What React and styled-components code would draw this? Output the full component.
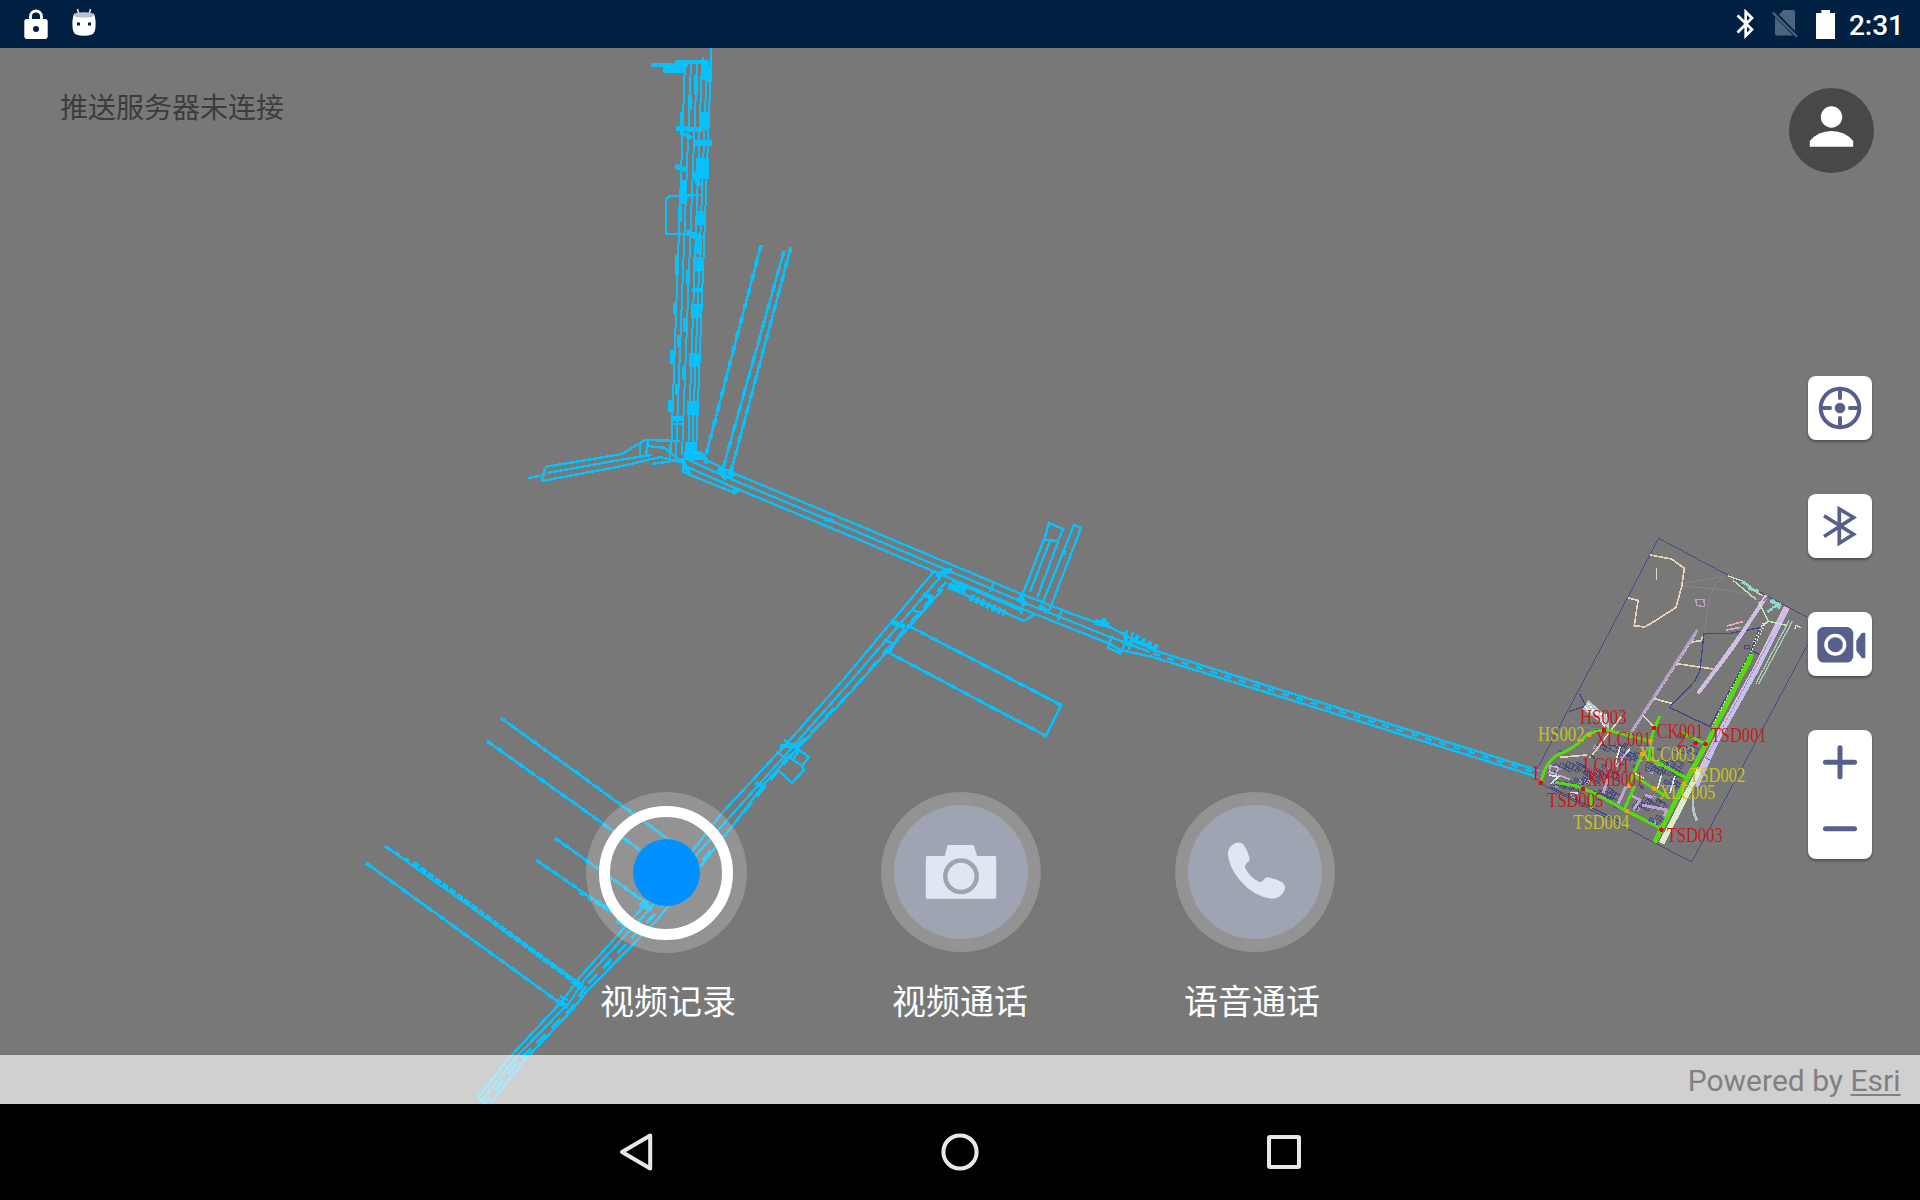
import React from 'react';
import styled, { createGlobalStyle } from 'styled-components';

const GlobalStyle = createGlobalStyle`
  * { box-sizing: border-box; }
  body { margin: 0; background: #000; }
  button { border: 0; padding: 0; font: inherit; }
  svg { display: block; }
`;

const Screen = styled.div`
  display: flex;
  flex-direction: column;
  width: 1920px;
  height: 1200px;
  overflow: hidden;
  font-family: Roboto, 'Noto Sans CJK SC', sans-serif;
`;

const StatusBar = styled.header`
  display: flex;
  align-items: center;
  justify-content: space-between;
  height: 48px;
  padding: 0 16px 0 24px;
  background: #002142;
  color: #fff;
`;

const StatusGroup = styled.div`
  display: flex;
  align-items: center;
  gap: ${(p) => p.$gap}px;
`;

const Clock = styled.time`
  font-size: 28px;
  line-height: 46px;
  font-weight: 500;
  padding-top: 3px;
  margin-left: -4px;
`;

const MapView = styled.main`
  position: relative;
  display: flex;
  flex-direction: column;
  height: 1056px;
  background: #787878;
`;

const MapCanvas = styled.svg`
  position: absolute;
  inset: 0;
`;

const Overlay = styled.div`
  position: relative;
  display: flex;
  flex: 1;
  flex-direction: column;
`;

const TopRow = styled.div`
  display: flex;
  justify-content: space-between;
  height: 327.5px;
  padding: 40px 46px 0 60px;
`;

const ServerStatus = styled.span`
  padding-top: 2px;
  font-size: 28px;
  line-height: 38px;
  color: #3c3c3c;
`;

const Avatar = styled.button`
  width: 85px;
  height: 85px;
  border-radius: 50%;
  background: #484848;
`;

const ToolColumn = styled.nav`
  display: flex;
  flex-direction: column;
  align-items: flex-end;
  gap: 54px;
  height: 416.5px;
  padding-right: 48px;
`;

const ToolButton = styled.button`
  flex: none;
  width: 64px;
  height: ${(p) => p.$height || 64}px;
  border-radius: 8px;
  background: #fff;
  box-shadow: 0 2px 3px rgba(0, 0, 0, 0.35);
`;

const CallRow = styled.div`
  display: flex;
  justify-content: center;
  gap: 134px;
  height: 188px;
`;

const CallButton = styled.button`
  display: flex;
  align-items: center;
  justify-content: center;
  width: ${(p) => p.$size || 160}px;
  height: ${(p) => p.$size || 160}px;
  border-radius: 50%;
  background: rgba(255, 255, 255, 0.2);
`;

const CallDisc = styled.span`
  display: flex;
  align-items: center;
  justify-content: center;
  width: 134px;
  height: 134px;
  border-radius: 50%;
  background: #9ea4b2;
`;

const RecordRing = styled(CallDisc)`
  border: 11px solid #fff;
  background: none;
`;

const RecordDot = styled.span`
  width: 67px;
  height: 67px;
  border-radius: 50%;
  background: #0090ff;
`;

const LabelRow = styled.div`
  display: flex;
  justify-content: center;
  gap: 156px;
`;

const CallLabel = styled.span`
  width: 136px;
  font-size: 34px;
  line-height: 44px;
  color: #fff;
  white-space: nowrap;
`;

const Attribution = styled.footer`
  position: relative;
  display: flex;
  align-items: center;
  justify-content: flex-end;
  height: 49px;
  padding: 3px 19.500px 0 0;
  background: rgba(255, 255, 255, 0.65);
  color: #808080;
  font-size: 30px;
  line-height: 40px;
  white-space: pre;
`;

const Provider = styled.span`
  text-decoration: underline;
  text-decoration-thickness: 2px;
  text-underline-offset: 3px;
`;

const NavBar = styled.nav`
  display: flex;
  align-items: center;
  justify-content: center;
  height: 96px;
  background: #000;
`;

const NavButton = styled.button`
  display: flex;
  align-items: center;
  justify-content: center;
  width: 324px;
  height: 96px;
  background: none;
`;

const INK = '#57608a';

const trunk = [
  [685, 671], [691, 676], [697, 682], [702, 688], [707, 692], [711, 696],
].map(([a, b]) => `M${a} 62L${b} 455`).join('');

const mains = [
  'M652 464L700 457L733 473L860 526L1020 593.500L1075 615L1110 627L1153 650L1540 771',
  'M684 458L733 480L860 533L1020 601L1110 637L1150 652',
  'M683 465L735 488L860 540L1020 608L1110 644L1120 650L1153 657L1538 777',
  'M683 472L735 493L740 489',
  'M683 460V473',
];

const southWest = [
  'M935 570L843 680L790 740L722 813L693 850L643 907L580 977L563 1000L510 1057L478 1097L486 1104',
  'M942 575L850 682L797 742L729 818L698 853L648 911L585 979L569 1003L516 1057L483 1099',
  'M943 589L850 693L765 783L727 833L704 862L658 919L588 990L572 1010L522 1063L491 1103',
];

const branches = [
  'M501 718L672 842', 'M487 741L640 850', 'M555 838L645 902', 'M536 860L623 920',
  'M385 846L577 982', 'M366 863L560 1003',
  'M761 245L706 455', 'M784 251L722 472', 'M791 247L730 475',
  'M907 625L1061 705L1046 736L884 650',
  'M1022 596L1045 537L1049 523L1063 529L1058 541L1045 540',
  'M1030 592L1050 541', 'M1037 598L1058 542', 'M1043 602L1074 525L1081 528L1049 611',
  'M950 588L1024 621L1035 614', 'M952 581L1020 610L1022 614',
  'M1112 635L1108 648L1120 653L1127 640', 'M1127 630L1124 646M1133 632L1129 650',
  'M545 467L622 454L645 440L680 441', 'M547 473L625 459L652 455', 'M542 481L622 466L660 457L680 462',
  'M528 478L545 475V468L542 481', 'M640 442V457M648 440L646 455', 'M648 446L665 448L686 466',
  'M700 195L670 196L666 199V234L690 234', 'M711 48V80', 'M703 57V66',
  'M784 740L809 757L802 766L804 770L792 783L778 770L786 758L776 752',
  'M790 744L799 750L793 760L801 765M785 754L794 760',
  'M912 610L922 613L933 600', 'M884 640L894 644L890 652L884 650',
  'M560 996L568 1000M574 980L582 984',
  'M994 582L990 592M1062 610L1058 621M670 445V462M676 441V460',
];

const heavy = [
  ['M651 64.500H688', 4], ['M675 62H709', 4], ['M663 70H686', 6], ['M705 62V80', 8], ['M709 66V82', 5],
  ['M704 112V130', 10], ['M676 128L702 130', 5], ['M682 133L692 138', 4], ['M695 143H712', 6],
  ['M702 158V179', 13], ['M675 166L686 170', 5], ['M694 172L699 186', 5], ['M700 211V225', 9],
  ['M686 232L702 239', 6], ['M699 240V254', 6], ['M697 257V271', 9], ['M697 288V292', 10],
  ['M696 304V318', 10], ['M694 353V367', 10], ['M692 401V415', 10], ['M690 442V460', 10],
  ['M672 418H682', 5], ['M674 424H682', 2], ['M684 455H702', 9], ['M682 460L690 475', 4],
  ['M682 112V135', 4], ['M690 95V110', 4], ['M696 75V94', 4], ['M680 206V222', 4], ['M683 180V204', 4],
  ['M677 255V275', 4], ['M688 270V285', 4], ['M675 303V314', 4], ['M685 318V332', 4], ['M679 335V347', 4],
  ['M672 350V364', 4], ['M684 366V380', 4], ['M677 384V395', 4], ['M670 400V412', 4],
  ['M719 468L727 479', 6], ['M729 469L733 477', 6], ['M732 492L740 489', 4], ['M701 454L708 463', 5],
  ['M948 586L966 591', 7], ['M936 575L952 570', 5], ['M923 594L933 598', 5], ['M892 622L905 627', 5],
  ['M1020 596L1025 606', 5], ['M1039 606L1048 612', 5], ['M1062 552H1066', 5],
  ['M1095 622L1109 625', 6], ['M1104 618V627', 4], ['M1124 632L1128 646', 4], ['M1132 640L1153 648', 4],
  ['M780 746L800 745', 4], ['M755 783L766 787', 4], ['M640 904L652 909', 6],
  ['M572 980L582 988', 6], ['M556 1000L568 1007', 5], ['M616 920L627 926', 4], ['M824 519L834 521', 4],
];

const dashed = [
  ['M413 863L574 981', 5, '7 2'], ['M580 892L620 916', 5, '6 3'], ['M970 597L1005 613', 7, '4 2'],
  ['M501 718L655 829', 3.5, '5 8'], ['M487 741L640 850', 3.5, '6 7'], ['M366 863L560 1003', 3.5, '6 9'],
  ['M536 860L580 890', 3.5, '5 6'], ['M555 838L645 902', 3.5, '5 7'],
  ['M385 846L413 864', 3.5, '5 7'], ['M761 245L706 455', 4, '6 9'], ['M784 251L722 472', 3.5, '7 11'],
  ['M791 247L730 475', 3.5, '6 9'], ['M907 625L1061 705', 3.5, '6 8'], ['M884 650L1046 736', 3.5, '6 9'],
  ['M1153 653.500L1540 774', 2.5, '7 8'], ['M1135 637L1158 648', 6, '4 3'],
  ['M946 582L853 689L800 744L730 829L702 861L652 917L586 986', 3, '13 8'],
  ['M586 986L571 1009L519 1060L487 1101', 3, '13 8'],
];

const labels = [
  ['HS003', 180, 612, 'r'], ['HS002', 54, 664, 'y'], ['XLC001', 226, 677, 'r'], ['CK001', 410, 655, 'r'],
  ['2', 470, 682, 'r'], ['TSD001', 572, 665, 'r'], ['XLC003', 356, 723, 'y'], ['LC001', 190, 755, 'r'],
  ['1', 33, 780, 'r'], ['XMB001', 202, 798, 'r'], ['TSD002', 508, 787, 'y'], ['XLC005', 418, 838, 'y'],
  ['TSD005', 82, 862, 'r'], ['TSD004', 160, 927, 'y'], ['TSD003', 440, 967, 'r'],
];

const stops = [
  [62, 788, 'r'], [252, 630, 'r'], [208, 644, 'o'], [403, 624, 'r'], [392, 663, 'o'], [527, 669, 'r'],
  [557, 672, 'r'], [366, 703, 'o'], [214, 775, 'r'], [262, 768, 'r'], [189, 808, 'r'], [328, 798, 'o'],
  [403, 806, 'o'], [491, 793, 'o'], [321, 874, 'o'], [424, 929, 'r'],
];

const blocks = [
  [100, 712, 110, 56, 16], [90, 772, 96, 40, 13], [190, 725, 105, 90, 24], [375, 722, 115, 58, 24],
  [300, 680, 60, 48, 10], [340, 815, 95, 78, 20], [210, 650, 120, 60, 8], [460, 660, 70, 50, 9],
  [400, 700, 85, 50, 8], [215, 800, 90, 40, 10],
];

const BuildingBlock = ({ spec: [x, y, w, h, n] }) => (
  <g transform={`rotate(27 ${x + w / 2} ${y + h / 2})`}>
    {Array.from({ length: n }, (_, i) => {
      const cx = x + ((i * 37) % 97) / 97 * w;
      const cy = y + ((i * 53) % 89) / 89 * h;
      return (
        <rect key={i} x={cx} y={cy} width={10 + (i * 7) % 17} height={6 + (i * 5) % 12}
          fill={i % 5 === 0 ? '#62678a' : 'none'} stroke={i % 7 === 3 ? '#b9a4d0' : '#454a7c'} strokeWidth="3" />
      );
    })}
  </g>
);

const Campus = () => (
  <g transform="translate(1520 520) scale(0.33333)" fill="none" strokeWidth="3">
    <path d="M416 55L862 292M862 375L515 1026L60 790M50 750L416 55" stroke="#444a84" />
    <path d="M490 190L610 170Q570 200 565 260L552 340M488 198L640 212L720 240M430 580L552 480M140 590L180 620L330 640" stroke="#858585" />
    <path d="M390 105L455 117L493 145L485 200L468 262L405 303L374 321L343 317L354 241L323 233M410 145V180M470 431L580 447M402 536L455 550M368 585L403 622M508 367L543 362L548 348M305 588L210 714M120 712L200 705" stroke="#ecd2b6" strokeWidth="5" />
    <path d="M554 340H630L720 323L690 400L570 620L448 562M552 340L540 450L524 484L450 560M180 522L197 558L148 574M674 376h14v10h-14zM700 395l18 8M90 800L300 905M200 555L240 600" stroke="#414780" strokeWidth="4" />
    <path d="M650 540L715 420" stroke="#4c5290" strokeWidth="6" />
    <path d="M528 239L552 238L553 260L529 256Z" stroke="#bba3c8" strokeWidth="4" />
    <path d="M532 330L325 650" stroke="#b79fc3" strokeWidth="9" />
    <path d="M528 345L325 655" stroke="#dcc8e4" strokeWidth="3" strokeDasharray="8 5" />
    <path d="M738 230L640 380L537 516" stroke="#d9bedf" strokeWidth="12" strokeLinecap="round" />
    <path d="M735 238L545 500" stroke="#bec2ed" strokeWidth="4" />
    <path d="M618 330L664 322M620 318L668 305" stroke="#dfadc8" strokeWidth="5" />
    <path d="M800 262L712 440L600 640L525 790" stroke="#e5bad9" strokeWidth="19" />
    <path d="M800 266L712 444L602 640L530 800" stroke="#bec2f4" strokeWidth="11" />
    <path d="M755 350L560 710" stroke="#6268a0" strokeWidth="2" strokeDasharray="8 4" />
    <path d="M807 302L708 490M818 302L716 492" stroke="#aacbb5" strokeWidth="4" />
    <path d="M740 305L575 620M730 310L700 370" stroke="#d9e9c9" strokeWidth="4" strokeDasharray="4 6" />
    <path d="M625 168L672 185L710 215L690 205L740 235M640 182L708 238M715 245L746 304L724 319M746 304L800 316M824 328L828 316L842 322" stroke="#c9e8ba" strokeWidth="4" />
    <path d="M665 185l28 16M684 205l32 8M750 245l32 8M756 238l24 28M756 262l28 -8M742 276l14 -10" stroke="#8fd8cc" strokeWidth="8" />
    <path d="M720 225l-12 14M732 225l-12 18M744 230l-14 14" stroke="#9d6792" strokeWidth="4" />
    <path d="M205 540L268 595V628L232 600L188 568Z" fill="#b9c7ce" stroke="none" />
    <path d="M195 560L250 600M205 550L255 620M200 572L260 585" stroke="#eefafa" strokeWidth="5" strokeDasharray="7 3" />
    {blocks.map((b) => <BuildingBlock key={b.join()} spec={b} />)}
    <path d="M318 800L294 852M262 778L250 820M340 870L360 840L330 825M365 855L440 870L432 890M375 825L395 832" stroke="#c0a3d0" strokeWidth="9" />
    <path d="M90 738L115 742L108 762L88 756ZM115 765L150 778M325 690L290 740" stroke="#d4acd7" strokeWidth="5" />
    <path d="M86 765L115 770L92 792M150 818L175 820M345 760L372 775M425 765L412 808M465 767L450 820M300 680L285 735M330 686L315 704" stroke="#d5eadf" strokeWidth="5" />
    <path d="M540 745L425 970" stroke="#dceecb" strokeWidth="17" />
    <path d="M519 825V860Q522 885 531 902" stroke="#afc8d2" strokeWidth="8" />
    <path d="M555 712L610 742M470 688L484 668M530 670L524 714M540 680L534 714" stroke="#666bb0" />
    <g stroke="#54dc0c" strokeWidth="9" strokeLinecap="round">
      <path d="M694 408L560 670" strokeWidth="14" />
      <path d="M560 670L494 790L406 962" strokeWidth="14" />
      <path d="M64 786Q70 735 110 706Q165 687 205 640L255 628L392 664L403 624L418 592" />
      <path d="M392 664L388 714L498 774M366 703L325 798M345 770L403 806L438 830M343 800L314 866M110 788L170 798L225 820L321 874L424 926M214 818V862M490 640L557 672" />
    </g>
    {stops.map(([x, y, c]) => <circle key={`${x}-${y}`} cx={x} cy={y} r="7" fill={c === 'r' ? '#e80808' : '#ff9d0a'} />)}
    <g fontFamily="'Liberation Serif', serif" fontSize="61" shapeRendering="auto">
      {labels.map(([t, x, y, c]) => (
        <text key={t + x} x={x} y={y} textLength={t.length * 28} lengthAdjust="spacingAndGlyphs"
          fill={c === 'r' ? '#cc181c' : '#c7c322'} stroke="none">{t}</text>
      ))}
    </g>
  </g>
);

const MapLayer = () => (
  <MapCanvas width="1920" height="1056" viewBox="0 48 1920 1056" shapeRendering="crispEdges">
    <g fill="none" stroke="#08c0fa">
      <path d={trunk} strokeWidth="2" />
      {[...mains, ...southWest, ...branches].map((d) => <path key={d} d={d} strokeWidth="2.4" />)}
      {heavy.map(([d, w]) => <path key={d} d={d} strokeWidth={w} />)}
      {dashed.map(([d, w, dash]) => <path key={d + w} d={d} strokeWidth={w} strokeDasharray={dash} />)}
    </g>
    <Campus />
  </MapCanvas>
);

const LockIcon = () => (
  <svg width="24" height="32" viewBox="24 7 24 32">
    <path d="M30.500 20V15.500a5.500 5.500 0 0 1 11 0V20" fill="none" stroke="#fff" strokeWidth="2.800" />
    <rect x="24.300" y="18" width="23.400" height="20" rx="2.400" fill="#fff" />
    <circle cx="36" cy="28" r="3" fill="#002142" />
  </svg>
);

const RobotIcon = () => (
  <svg width="24" height="32" viewBox="72 8 24 32">
    <path d="M77.500 9L79 15M90.500 9L89 15" stroke="#fff" strokeWidth="1.400" />
    <path d="M73.500 15Q72 20 72.500 27Q73 33 76 34.500Q84 37 92 34.500Q95 33 95.500 27Q96 20 94.500 15Z" fill="#fff" />
    <ellipse cx="84" cy="15" rx="10.500" ry="2.700" fill="#b9c1d0" />
    <path d="M77 22.500h3v3h-3zM88 22.500h3v3h-3z" fill="#002142" />
  </svg>
);

const StatusBluetooth = () => (
  <svg width="18" height="30" viewBox="1736 9 18 30">
    <path d="M1737.500 15.500L1752 29.500L1745.700 35.800V11.700L1752 18L1737.500 32.500" fill="none" stroke="#fff" strokeWidth="2.700" />
  </svg>
);

const NoSimIcon = () => (
  <svg width="26" height="30" viewBox="1772 10 26 30">
    <path d="M1779 15.500L1783.500 11H1793Q1795 11 1795 13V32ZM1775 18L1793 36.500H1777Q1775 36.500 1775 34.500Z" fill="#4d6480" />
    <path d="M1772.800 13.500L1797 37.800" stroke="#4d6480" strokeWidth="2.200" />
  </svg>
);

const BatteryIcon = () => (
  <svg width="19" height="29" viewBox="0 0 19 29">
    <path d="M5.300 0h8.700v3H19v26H0V3h5.300z" fill="#fff" />
  </svg>
);

const PersonIcon = () => (
  <svg width="85" height="85" viewBox="0 0 85 85" fill="#fff">
    <circle cx="42.500" cy="29" r="10.700" />
    <path d="M20.800 58.700V53Q29 43 42.500 43T64.200 53V58.700Z" />
  </svg>
);

const TargetIcon = () => (
  <svg width="64" height="64" viewBox="0 0 64 64" fill="none" stroke={INK} strokeWidth="4">
    <circle cx="32" cy="32" r="19.300" />
    <path d="M32 13V22M32 42V51M13 32H22M42 32H51" strokeLinecap="round" />
    <circle cx="32" cy="32" r="5.300" fill={INK} stroke="none" />
  </svg>
);

const BluetoothIcon = () => (
  <svg width="64" height="64" viewBox="0 0 64 64" fill="none" stroke={INK} strokeWidth="3.700">
    <path d="M16 21.700L45.500 40.300L31.300 49.200V15L45.500 23.500L16 42.500" />
  </svg>
);

const CamcorderIcon = () => (
  <svg width="64" height="64" viewBox="0 0 64 64" fill={INK}>
    <rect x="9.300" y="15" width="36" height="35.600" rx="6.500" />
    <circle cx="27.300" cy="32.700" r="9.300" fill={INK} stroke="#fff" strokeWidth="3.500" />
    <path d="M48.300 28.800L53.500 21.300Q54 20.800 55 20.800H57.300V46.300H55Q54 46.300 53.500 45.600L48.300 38.500Z" />
  </svg>
);

const ZoomIcon = () => (
  <svg width="64" height="129" viewBox="0 0 64 129" fill="none" stroke={INK} strokeWidth="5" strokeLinecap="round">
    <path d="M17.500 32.200H46.500M32 17.700V46.700M17.500 98.800H46.500" />
  </svg>
);

const CameraIcon = () => (
  <svg width="134" height="134" viewBox="893 805 134 134">
    <path d="M947.500 845H971.500Q972.500 845 973 846L976 856H994Q995.200 856 995.200 857.500V897Q995.200 898.700 994 898.700H926.300Q924.800 898.700 924.800 897V857.500Q924.800 856 926.300 856H943.700L946.500 846Q947 845 947.500 845Z" fill="#e0e6f2" />
    <circle cx="960" cy="876.300" r="15.700" fill="none" stroke="#9ea4b2" strokeWidth="4.500" />
  </svg>
);

const PhoneIcon = () => (
  <svg width="134" height="134" viewBox="1187 805 134 134">
    <path d="M1233 843.800Q1239 841 1242.500 844.500Q1246.500 850 1248.600 858Q1249 860.500 1246.500 862.500Q1243.500 864.500 1244 867.500Q1248.500 877 1257.500 881.500Q1260.500 883 1262.500 880Q1264.500 876.500 1267.500 877.500Q1275 878.800 1281.500 882.500Q1285 885.500 1283.500 890.500Q1279.500 898.700 1270.500 898.700Q1252 896 1240 881.500Q1228 868 1226.800 853.500Q1227 847.500 1233 843.800Z" fill="#e0e6f2" />
  </svg>
);

const BackIcon = () => (
  <svg width="40" height="40" viewBox="616 1132 40 40">
    <path d="M650.200 1135.500V1168.500L622 1152Z" fill="none" stroke="#e8e8e8" strokeWidth="4" strokeLinejoin="round" />
  </svg>
);

const HomeIcon = () => (
  <svg width="38" height="38" viewBox="0 0 38 38">
    <circle cx="19" cy="19" r="16.600" fill="none" stroke="#e8e8e8" strokeWidth="4" />
  </svg>
);

const RecentsIcon = () => (
  <svg width="36" height="36" viewBox="0 0 36 36">
    <rect x="3" y="3" width="30" height="30" rx="1" fill="none" stroke="#e8e8e8" strokeWidth="4" />
  </svg>
);

export default function App() {
  return (
    <Screen>
      <GlobalStyle />
      <StatusBar>
        <StatusGroup $gap={24}>
          <LockIcon />
          <RobotIcon />
        </StatusGroup>
        <StatusGroup $gap={18}>
          <StatusBluetooth />
          <NoSimIcon />
          <BatteryIcon />
          <Clock>2:31</Clock>
        </StatusGroup>
      </StatusBar>
      <MapView>
        <MapLayer />
        <Overlay>
          <TopRow>
            <ServerStatus>推送服务器未连接</ServerStatus>
            <Avatar><PersonIcon /></Avatar>
          </TopRow>
          <ToolColumn>
            <ToolButton><TargetIcon /></ToolButton>
            <ToolButton><BluetoothIcon /></ToolButton>
            <ToolButton><CamcorderIcon /></ToolButton>
            <ToolButton $height={129}><ZoomIcon /></ToolButton>
          </ToolColumn>
          <CallRow>
            <CallButton $size={161}><RecordRing><RecordDot /></RecordRing></CallButton>
            <CallButton><CallDisc><CameraIcon /></CallDisc></CallButton>
            <CallButton><CallDisc><PhoneIcon /></CallDisc></CallButton>
          </CallRow>
          <LabelRow>
            <CallLabel>视频记录</CallLabel>
            <CallLabel>视频通话</CallLabel>
            <CallLabel>语音通话</CallLabel>
          </LabelRow>
        </Overlay>
        <Attribution>Powered by <Provider>Esri</Provider></Attribution>
      </MapView>
      <NavBar>
        <NavButton><BackIcon /></NavButton>
        <NavButton><HomeIcon /></NavButton>
        <NavButton><RecentsIcon /></NavButton>
      </NavBar>
    </Screen>
  );
}
